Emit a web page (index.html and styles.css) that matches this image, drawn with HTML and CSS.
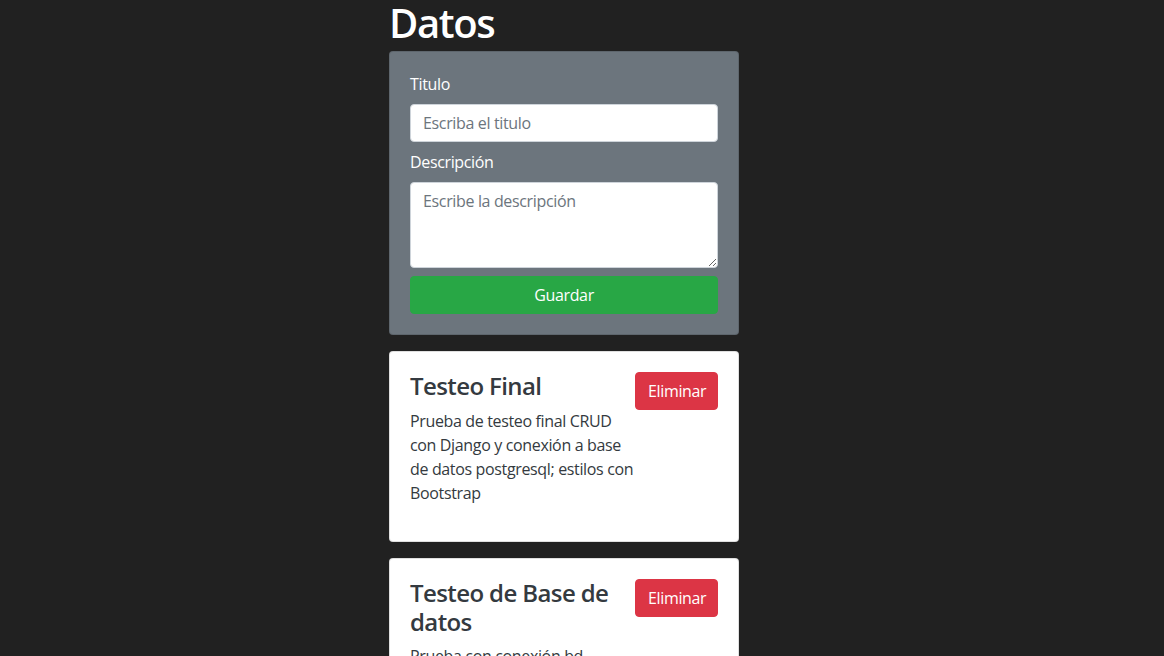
FILE: index.html
```html
<!DOCTYPE html>
<html lang="es">
<head>
<meta charset="utf-8">
<title>Datos</title>
<link rel="stylesheet" href="styles.css">
</head>
<body>
<main class="wrap">
  <h1 class="heading">Datos</h1>
  <section class="panel form-panel">
    <form class="form">
      <label class="label" for="titulo">Titulo</label>
      <input class="control" id="titulo" type="text" placeholder="Escriba el titulo">
      <label class="label" for="desc">Descripción</label>
      <textarea class="control area" id="desc" placeholder="Escribe la descripción"></textarea>
      <button class="btn btn-save" type="button">Guardar</button>
    </form>
  </section>

  <article class="panel card">
    <div class="card-text">
      <h3 class="card-title">Testeo Final</h3>
      <p class="card-desc">Prueba de testeo final CRUD con Django y conexión a base de datos postgresql; estilos con Bootstrap</p>
    </div>
    <button class="btn btn-del" type="button">Eliminar</button>
  </article>

  <article class="panel card">
    <div class="card-text">
      <h3 class="card-title">Testeo de Base de datos</h3>
      <p class="card-desc">Prueba con conexión bd</p>
    </div>
    <button class="btn btn-del" type="button">Eliminar</button>
  </article>
</main>
</body>
</html>
```

FILE: styles.css
```css
* { box-sizing: border-box; }
html, body { margin: 0; padding: 0; }
body {
  background: #212121;
  font-family: "Open Sans", "Noto Sans", sans-serif;
  font-size: 16px;
  line-height: 24px;
  letter-spacing: -0.35px;
  color: #212529;
  overflow: hidden;
  height: 656px;
}
.wrap {
  width: 350px;
  margin-left: 389px;
}
.heading {
  margin: 0 0 8px;
  height: 43px;
  padding-top: 3px;
  font-size: 40px;
  line-height: 40px;
  font-weight: 600;
  letter-spacing: -1.4px;
  color: #fff;
}
.panel {
  border: 1px solid rgba(0,0,0,.125);
  border-radius: 4px;
  padding: 20px;
  margin-bottom: 16px;
}
.form-panel { background: #6c757d; }
.form { display: flex; flex-direction: column; }
.label {
  color: #fff;
  margin-bottom: 8px;
}
.control {
  font: inherit;
  letter-spacing: inherit;
  height: 38px;
  padding: 6px 12px;
  border: 1px solid #ced4da;
  border-radius: 4px;
  background: #fff;
  color: #495057;
  margin-bottom: 8px;
}
.control::placeholder { color: #6c757d; }
.area { height: 86px; resize: vertical; }
.btn {
  font: inherit;
  letter-spacing: inherit;
  height: 38px;
  padding: 6px 12px;
  border: 1px solid transparent;
  border-radius: 4px;
  color: #fff;
  cursor: pointer;
}
.btn-save { background: #28a745; border-color: #28a745; }
.card {
  background: #fff;
  display: flex;
  justify-content: space-between;
  align-items: flex-start;
}
.card-text { width: 225px; }
.card-title {
  margin: 0 0 8px;
  font-size: 24px;
  line-height: 28.8px;
  font-weight: 600;
  letter-spacing: -0.6px;
  color: #343a40;
}
.card-desc { margin: 0 0 16px; color: #343a40; }
.btn-del { background: #dc3545; border-color: #dc3545; flex: none; width: 83px; }
```
